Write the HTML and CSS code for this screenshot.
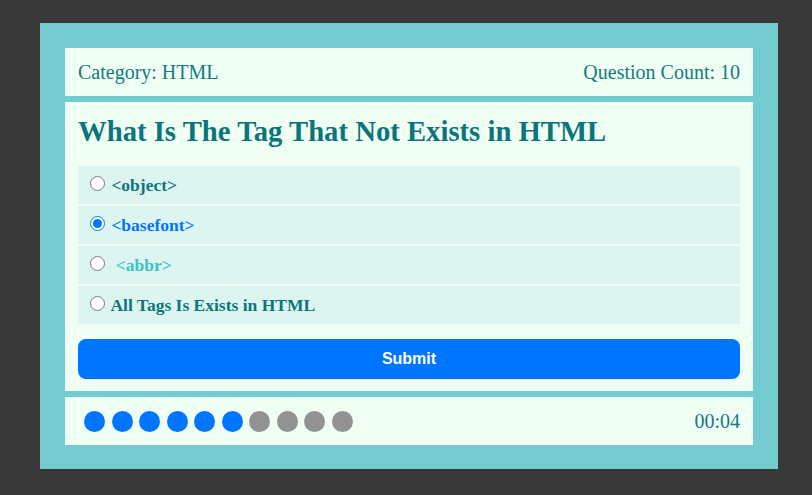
FILE: index.html
```html
<!DOCTYPE html>
<html>
<head>
<meta charset="utf-8">
<link rel="stylesheet" href="styles.css">
</head>
<body>
<div class="quiz">
  <div class="info">
    <span>Category: HTML</span>
    <span>Question Count: 10</span>
  </div>
  <div class="card">
    <h2 class="question">What Is The Tag That Not Exists in HTML</h2>
    <div class="answers">
      <label class="answer"><input type="radio" name="a"> &lt;object&gt;</label>
      <label class="answer selected"><input type="radio" name="a" checked> &lt;basefont&gt;</label>
      <label class="answer light"><input type="radio" name="a"> &nbsp;&lt;abbr&gt;</label>
      <label class="answer"><input type="radio" name="a"> All Tags Is Exists in HTML</label>
    </div>
    <button class="submit">Submit</button>
  </div>
  <div class="footer">
    <div class="bullets">
      <span class="dot on"></span><span class="dot on"></span><span class="dot on"></span><span class="dot on"></span><span class="dot on"></span><span class="dot on"></span><span class="dot"></span><span class="dot"></span><span class="dot"></span><span class="dot"></span>
    </div>
    <div class="timer">00:04</div>
  </div>
</div>
</body>
</html>
```
FILE: styles.css
```css
html, body {
  margin: 0;
  background: #383838;
}
body {
  padding-top: 23px;
  font-family: "Liberation Serif", "Times New Roman", serif;
}
.quiz {
  margin-left: 40px;
  width: 738px;
  box-sizing: border-box;
  padding: 25px 25px 24px;
  background: #74ccd1;
  display: flex;
  flex-direction: column;
  gap: 6px;
}
.info {
  height: 48px;
  background: #effff4;
  display: flex;
  align-items: center;
  justify-content: space-between;
  padding: 0 13px;
  font-size: 20px;
  color: #157a80;
}
.card {
  background: #effff4;
  padding: 13px 13px 12px;
  display: flex;
  flex-direction: column;
}
.question {
  margin: 0 0 19px;
  font-size: 28.7px;
  line-height: 32px;
  font-weight: bold;
  color: #0b757b;
}
.answers {
  display: flex;
  flex-direction: column;
  gap: 2px;
}
.answer {
  height: 38px;
  background: #dcf5f1;
  display: flex;
  align-items: center;
  padding-left: 7px;
  font-size: 17.5px;
  font-weight: bold;
  color: #0c777b;
  white-space: pre;
}
.answer input {
  margin: 0 2px 3px 5px;
  width: 15px;
  height: 15px;
}
.answer.selected {
  color: #0075ff;
}
.answer.light {
  color: #3fc2c6;
}
.submit {
  margin-top: 15px;
  height: 40px;
  border: none;
  border-radius: 8px;
  background: #0075ff;
  color: #fff;
  font-family: "Liberation Sans", Arial, sans-serif;
  font-weight: bold;
  font-size: 16px;
}
.footer {
  height: 48px;
  background: #effff4;
  display: flex;
  align-items: center;
  justify-content: space-between;
  padding: 0 13px 0 19px;
}
.bullets {
  display: flex;
  gap: 6.5px;
}
.dot {
  width: 21px;
  height: 21px;
  border-radius: 50%;
  background: #929292;
}
.dot.on {
  background: #0075ff;
}
.timer {
  font-size: 20px;
  color: #157a80;
}
```
